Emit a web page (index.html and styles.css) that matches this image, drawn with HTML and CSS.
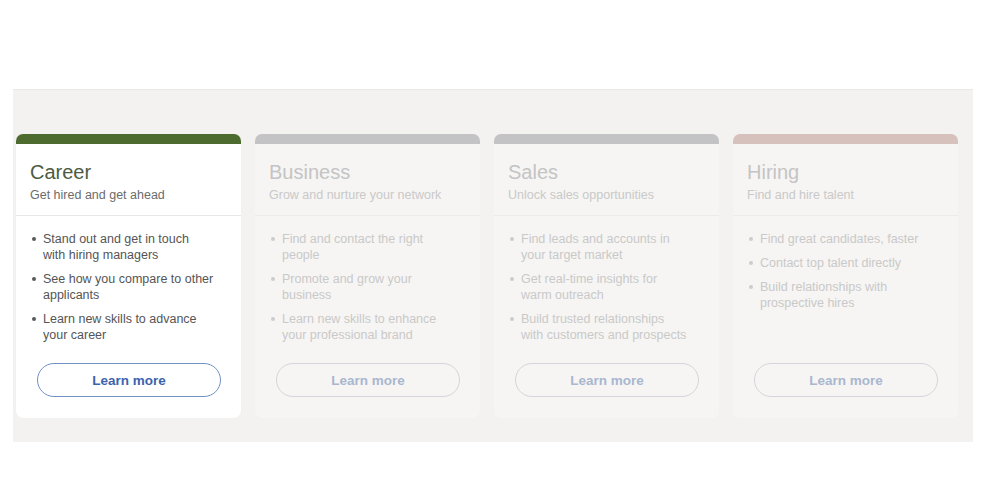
FILE: index.html
```html
<!DOCTYPE html>
<html lang="en">
<head>
<meta charset="utf-8">
<title>Explore</title>
<link rel="stylesheet" href="styles.css">
</head>
<body>
<section class="panel">
  <div class="card card-active card-career">
    <div class="bar"></div>
    <div class="head">
      <h2 class="title">Career</h2>
      <p class="sub">Get hired and get ahead</p>
    </div>
    <div class="body">
      <ul class="list">
        <li>Stand out and get in touch<br>with hiring managers</li>
        <li>See how you compare to other<br>applicants</li>
        <li>Learn new skills to advance<br>your career</li>
      </ul>
      <button class="btn">Learn more</button>
    </div>
  </div>
  <div class="card card-faded card-business">
    <div class="bar"></div>
    <div class="head">
      <h2 class="title">Business</h2>
      <p class="sub">Grow and nurture your network</p>
    </div>
    <div class="body">
      <ul class="list">
        <li>Find and contact the right<br>people</li>
        <li>Promote and grow your<br>business</li>
        <li>Learn new skills to enhance<br>your professional brand</li>
      </ul>
      <button class="btn">Learn more</button>
    </div>
  </div>
  <div class="card card-faded card-sales">
    <div class="bar"></div>
    <div class="head">
      <h2 class="title">Sales</h2>
      <p class="sub">Unlock sales opportunities</p>
    </div>
    <div class="body">
      <ul class="list">
        <li>Find leads and accounts in<br>your target market</li>
        <li>Get real-time insights for<br>warm outreach</li>
        <li>Build trusted relationships<br>with customers and prospects</li>
      </ul>
      <button class="btn">Learn more</button>
    </div>
  </div>
  <div class="card card-faded card-hiring">
    <div class="bar"></div>
    <div class="head">
      <h2 class="title">Hiring</h2>
      <p class="sub">Find and hire talent</p>
    </div>
    <div class="body">
      <ul class="list">
        <li>Find great candidates, faster</li>
        <li>Contact top talent directly</li>
        <li>Build relationships with<br>prospective hires</li>
      </ul>
      <button class="btn">Learn more</button>
    </div>
  </div>
</section>
</body>
</html>
```
FILE: styles.css
```css
* { box-sizing: border-box; }
html, body { margin: 0; padding: 0; background: #ffffff; }
body {
  font-family: "Liberation Sans", Arial, Helvetica, sans-serif;
  width: 990px;
  height: 500px;
  overflow: hidden;
}
.panel {
  margin: 89px 0 0 13px;
  width: 960px;
  height: 353px;
  background: #f3f2f0;
  border-top: 1px solid #e9e8e6;
  padding: 44px 15px 24px 3px;
  display: flex;
  gap: 14px;
}
.card {
  width: 225px;
  flex: none;
  display: flex;
  flex-direction: column;
  border-radius: 7px;
  overflow: hidden;
}
.bar {
  height: 10px;
  flex: none;
}
.head {
  padding: 16px 14px 12px 14px;
  border-bottom: 1px solid #e7e7e7;
}
.title {
  margin: 0;
  font-size: 20px;
  line-height: 24px;
  font-weight: 400;
}
.sub {
  margin: 3px 0 0;
  font-size: 12.5px;
  line-height: 16px;
}
.body {
  flex: 1;
  display: flex;
  flex-direction: column;
  padding: 15px 21px 21px 16px;
}
.list {
  list-style: none;
  margin: 0;
  padding: 0;
  display: flex;
  flex-direction: column;
  gap: 8px;
}
.list li {
  position: relative;
  padding-left: 11px;
  font-size: 12.5px;
  line-height: 16px;
  white-space: nowrap;
}
.list li::before {
  content: "";
  position: absolute;
  left: 0;
  top: 6px;
  width: 4px;
  height: 4px;
  border-radius: 50%;
}
.btn {
  margin-top: auto;
  margin-left: 5px;
  height: 34px;
  width: 184px;
  border-radius: 17px;
  background: transparent;
  font-family: inherit;
  font-size: 13.5px;
  font-weight: 700;
  cursor: pointer;
}

/* active card */
.card-active { background: #ffffff; box-shadow: 0 0 1px rgba(0,0,0,0.06); }
.card-career .bar { background: #4d6a2f; }
.card-active .title { color: #4c5b42; }
.card-active .sub { color: #6c6c6c; }
.card-active .list li { color: #555555; }
.card-active .list li::before { background: #5a5a5a; }
.card-active .btn { border: 1px solid #7390c6; color: #3d63ad; }

/* faded cards */
.card-faded { background: #f6f5f3; }
.card-faded .head { border-bottom-color: #ecebe9; }
.card-business .bar, .card-sales .bar { background: #c3c2c4; }
.card-hiring .bar { background: #d6c1bc; }
.card-faded .title { color: #c4c4c4; }
.card-faded .sub { color: #c9c9c9; }
.card-faded .list li { color: #c9c9c9; }
.card-faded .list li::before { background: #cccccc; }
.card-faded .btn { border: 1px solid #d3d5da; color: #a9b7d0; }
```
